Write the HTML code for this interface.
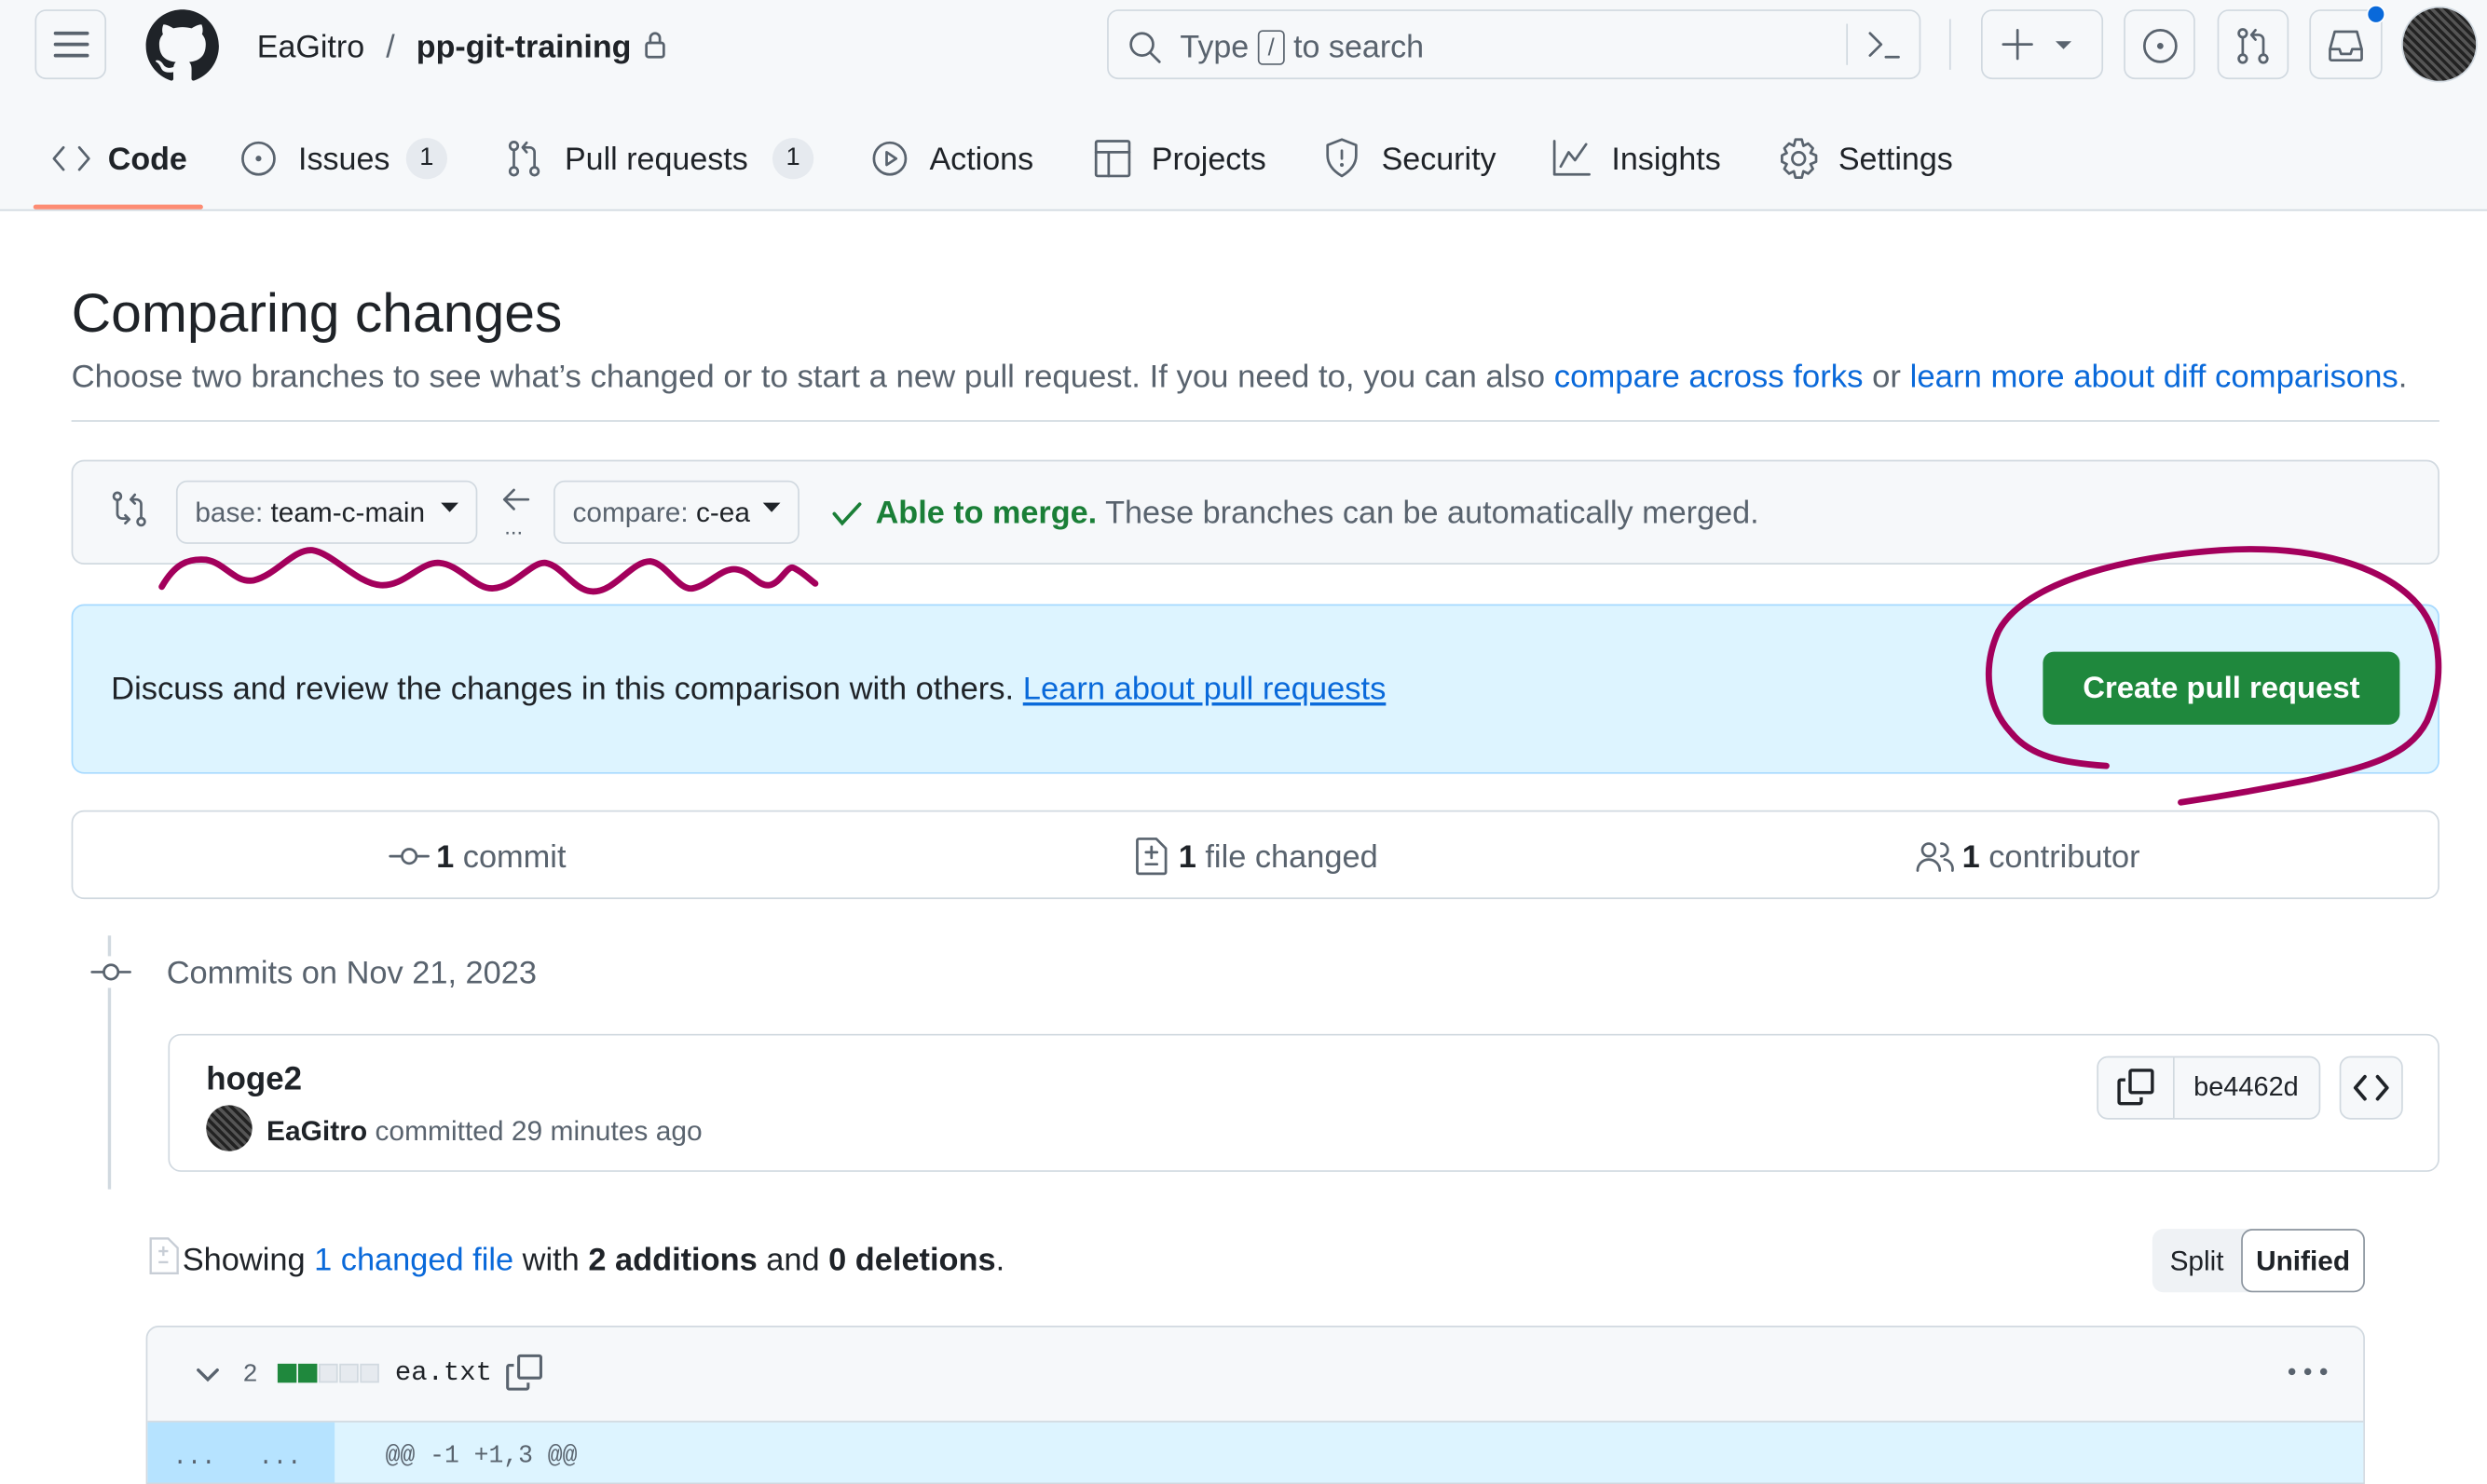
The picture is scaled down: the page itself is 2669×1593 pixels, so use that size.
<!DOCTYPE html>
<html><head><meta charset="utf-8"><style>
*{box-sizing:border-box;margin:0;padding:0}
html,body{width:2669px;height:1575px;overflow:hidden;background:#fff}
#w{position:absolute;left:0;top:0;width:1568px;height:925px;transform:scale(1.70217);transform-origin:0 0;font-family:"Liberation Sans",sans-serif;color:#1f2328}
.a{position:absolute;white-space:nowrap}
.btn{position:absolute;border:1px solid #d1d9e0;border-radius:7px;background:#f6f8fa}
svg{position:absolute;overflow:visible}
.ic{fill:none;stroke:#59636e;stroke-width:1.6;stroke-linecap:round;stroke-linejoin:round}
.t{font-size:20px;top:90px}
.cnt{position:absolute;top:87px;width:26px;height:26px;border-radius:13px;background:#e6eaef;font-size:16px;text-align:center;line-height:26px}
.mut{color:#59636e}
.lk{color:#0969da}
</style></head><body><div id="w">
<div class="a" style="left:0;top:0;width:1568px;height:133px;background:#f6f8fa;border-bottom:1px solid #d1d9e0"></div>
<div class="a" style="left:21px;top:129px;width:107px;height:3px;background:#fd8c73;border-radius:2px"></div>
<div class="btn" style="left:22px;top:6px;width:45px;height:44px"></div>
<svg style="left:34px;top:18px" width="22" height="20"><path d="M1 3H21M1 10H21M1 17H21" stroke="#59636e" stroke-width="2.2" stroke-linecap="round"/></svg>
<svg style="left:92px;top:6px" width="46" height="46" viewBox="0 0 16 16"><path fill="#1f2328" d="M8 0C3.58 0 0 3.58 0 8c0 3.540 2.29 6.53 5.47 7.59.4.07.55-.17.55-.38 0-.19-.01-.82-.01-1.490-2.01.37-2.53-.49-2.69-.94-.09-.23-.48-.94-.82-1.13-.28-.15-.68-.52-.01-.53.63-.01 1.08.58 1.23.82.72 1.21 1.87.87 2.33.66.07-.52.28-.87.51-1.07-1.78-.2-3.64-.89-3.64-3.95 0-.87.31-1.59.82-2.15-.08-.2-.36-1.02.08-2.12 0 0 .67-.21 2.2.82.64-.18 1.32-.27 2-.27.68 0 1.36.09 2 .27 1.53-1.04 2.2-.82 2.2-.82.44 1.1.16 1.92.08 2.12.51.56.82 1.27.82 2.15 0 3.07-1.87 3.75-3.65 3.95.29.25.54.73.54 1.48 0 1.07-.01 1.93-.01 2.2 0 .21.15.46.55.38A8.013 8.013 0 0016 8c0-4.42-3.58-8-8-8z"/></svg>
<div class="a" style="left:162px;top:19px;font-size:20px">EaGitro <span class="mut" style="margin:0 8px">/</span> <span style="font-weight:bold">pp-git-training</span></div>
<svg style="left:406px;top:19px" width="14" height="18"><rect x="1.5" y="8" width="11" height="9" rx="1.5" class="ic" stroke="#1f2328"/><path d="M4 8V5a3 3 0 016 0v3" class="ic" stroke="#1f2328"/></svg>
<div class="btn" style="left:698px;top:6px;width:513px;height:44px;background:#f6f8fa"></div>
<svg style="left:711px;top:19px" width="22" height="22"><circle cx="9" cy="9" r="7" class="ic" stroke-width="2"/><path d="M14 14L20 20" class="ic" stroke-width="2"/></svg>
<div class="a mut" style="left:744px;top:19px;font-size:20px">Type <span style="display:inline-block;border:1px solid #59636e;border-radius:3px;width:17px;height:22px;text-align:center;font-size:15px;line-height:21px;vertical-align:1px">/</span> to search</div>
<div class="a" style="left:1164px;top:15px;width:1px;height:26px;background:#d1d9e0"></div>
<svg style="left:1177px;top:18px" width="22" height="22"><path d="M2 3L9 10L2 17M12 18H20" class="ic" stroke-width="1.8"/></svg>
<div class="a" style="left:1229px;top:12px;width:1px;height:32px;background:#d1d9e0"></div>
<div class="btn" style="left:1249px;top:6px;width:77px;height:44px"></div>
<svg style="left:1262px;top:18px" width="50" height="20"><path d="M10 1V19M1 10H19" class="ic" stroke-width="2"/><path d="M34 8H44L39 13Z" fill="#59636e"/></svg>
<div class="btn" style="left:1339px;top:6px;width:45px;height:44px"></div>
<svg style="left:1350px;top:17px" width="24" height="24"><circle cx="12" cy="12" r="10" class="ic" stroke-width="2"/><circle cx="12" cy="12" r="2" fill="#59636e"/></svg>
<div class="btn" style="left:1398px;top:6px;width:45px;height:44px"></div>
<svg style="left:1409px;top:17px" width="24" height="24"><circle cx="5" cy="4" r="2.5" class="ic" stroke-width="1.8"/><circle cx="5" cy="20" r="2.5" class="ic" stroke-width="1.8"/><circle cx="18" cy="20" r="2.5" class="ic" stroke-width="1.8"/><path d="M5 7V17M18 17V8a3 3 0 00-3-3H11M13 2L10.5 5L13 8" class="ic" stroke-width="1.8"/></svg>
<div class="btn" style="left:1456px;top:6px;width:46px;height:44px"></div>
<svg style="left:1467px;top:17px" width="24" height="24"><path d="M2 14L5 3H19L22 14V20a1 1 0 01-1 1H3a1 1 0 01-1-1Z M2 14H8L9 17H15L16 14H22" class="ic" stroke-width="1.8"/></svg>
<div class="a" style="left:1492px;top:3px;width:12px;height:12px;border-radius:6px;background:#0969da;border:1px solid #fff"></div>
<div class="a" style="left:1514px;top:4px;width:48px;height:48px;border-radius:24px;background:repeating-linear-gradient(45deg,#555 0 2px,#222 2px 4px),#333;border:1px solid #d1d9e0"></div>
<!-- tabs -->
<svg style="left:33px;top:90px" width="24" height="20"><path d="M7 3L1 10L7 17M17 3L23 10L17 17" class="ic" stroke-width="1.8"/></svg>
<div class="a t" style="left:68px;font-weight:bold">Code</div>
<svg style="left:152px;top:88px" width="24" height="24"><circle cx="11" cy="12" r="10" class="ic" stroke-width="1.8"/><circle cx="11" cy="12" r="1.8" fill="#59636e"/></svg>
<div class="a t" style="left:188px">Issues</div><div class="cnt" style="left:256px">1</div>
<svg style="left:320px;top:88px" width="24" height="24"><circle cx="4" cy="4" r="2.5" class="ic"/><circle cx="4" cy="20" r="2.5" class="ic"/><circle cx="17" cy="20" r="2.5" class="ic"/><path d="M4 7V17M17 17V8a3 3 0 00-3-3H10M12 2L9.5 5L12 8" class="ic"/></svg>
<div class="a t" style="left:356px">Pull requests</div><div class="cnt" style="left:487px">1</div>
<svg style="left:550px;top:88px" width="24" height="24"><circle cx="11" cy="12" r="10" class="ic" stroke-width="1.8"/><path d="M9 8L15 12L9 16Z" class="ic"/></svg>
<div class="a t" style="left:586px">Actions</div>
<svg style="left:690px;top:88px" width="24" height="24"><rect x="1" y="1" width="21" height="22" rx="1" class="ic" stroke-width="1.8"/><path d="M1 8H22M9 8V23" class="ic" stroke-width="1.8"/></svg>
<div class="a t" style="left:726px">Projects</div>
<svg style="left:835px;top:87px" width="24" height="26"><path d="M11 1L2 4.5V11C2 17 6 21 11 24C16 21 20 17 20 11V4.5Z" class="ic" stroke-width="1.8"/><path d="M11 8V13" class="ic" stroke-width="2"/><circle cx="11" cy="17" r="1.2" fill="#59636e"/></svg>
<div class="a t" style="left:871px">Security</div>
<svg style="left:979px;top:88px" width="24" height="24"><path d="M1 1V22H23M5 17L10 8L14 13L21 3" class="ic" stroke-width="1.8"/></svg>
<div class="a t" style="left:1016px">Insights</div>
<svg style="left:1123px;top:87px" width="24" height="26"><circle cx="11" cy="13" r="4" class="ic" stroke-width="1.8"/><path d="M9 1H13L14 5L17 3.5L20 6.5L18.5 9.5L22 11V15L18.5 16.5L20 19.5L17 22.5L14 21L13 25H9L8 21L5 22.5L2 19.5L3.5 16.5L0.5 15V11L3.5 9.5L2 6.5L5 3.5L8 5Z" class="ic" stroke-width="1.6"/></svg>
<div class="a t" style="left:1159px">Settings</div>
<!-- heading -->
<div class="a" style="left:45px;top:179px;font-size:34.6px">Comparing changes</div>
<div class="a mut" style="left:45px;top:227px;font-size:20.4px">Choose two branches to see what’s changed or to start a new pull request. If you need to, you can also <span class="lk">compare across forks</span> or <span class="lk">learn more about diff comparisons</span>.</div>
<div class="a" style="left:45px;top:265px;width:1493px;height:1px;background:#d1d9e0"></div>
<!-- compare box -->
<div class="btn" style="left:45px;top:290px;width:1493px;height:66px;border-radius:8px"></div>
<svg style="left:70px;top:309px" width="24" height="24"><circle cx="4" cy="4" r="2.3" class="ic"/><circle cx="19" cy="20" r="2.3" class="ic"/><path d="M4 7V15a3 3 0 003 3H11M9 16L11.5 18.5L9 21M19 17V9a3 3 0 00-3-3H13M15 3L12.5 6L15 8.5" class="ic"/></svg>
<div class="btn" style="left:111px;top:303px;width:190px;height:40px"></div>
<div class="a" style="left:123px;top:313px;font-size:17.5px"><span class="mut">base:</span> team-c-main</div>
<svg style="left:278px;top:317px" width="12" height="8"><path d="M0 0H11L5.5 6Z" fill="#1f2328"/></svg>
<svg style="left:316px;top:307px" width="20" height="16"><path d="M17 8H2M8 2L2 8L8 14" class="ic" stroke-width="1.8"/></svg>
<div class="a mut" style="left:318px;top:324px;font-size:14px">...</div>
<div class="btn" style="left:349px;top:303px;width:155px;height:40px"></div>
<div class="a" style="left:361px;top:313px;font-size:17.5px"><span class="mut">compare:</span> c-ea</div>
<svg style="left:481px;top:317px" width="12" height="8"><path d="M0 0H11L5.5 6Z" fill="#1f2328"/></svg>
<svg style="left:524px;top:316px" width="20" height="16"><path d="M2 8L7 14L18 2" fill="none" stroke="#1a7f37" stroke-width="2.2" stroke-linecap="round"/></svg>
<div class="a" style="left:552px;top:313px;font-size:20.1px"><b style="color:#1a7f37">Able to merge.</b> <span class="mut">These branches can be automatically merged.</span></div>
<!-- blue box -->
<div class="a" style="left:45px;top:381px;width:1493px;height:107px;background:#ddf4ff;border:1px solid #a6d9ff;border-radius:8px"></div>
<div class="a" style="left:70px;top:424px;font-size:20.3px">Discuss and review the changes in this comparison with others. <span class="lk" style="text-decoration:underline">Learn about pull requests</span></div>
<div class="a" style="left:1288px;top:411px;width:225px;height:46px;background:#1f883d;border-radius:7px;color:#fff;font-weight:bold;font-size:19.3px;text-align:center;line-height:47px">Create pull request</div>
<!-- stats -->
<div class="a" style="left:45px;top:511px;width:1493px;height:56px;border:1px solid #d1d9e0;border-radius:8px"></div>
<svg style="left:245px;top:531px" width="26" height="18"><circle cx="13" cy="9" r="4.5" class="ic" stroke-width="1.8"/><path d="M1 9H8M18 9H25" class="ic" stroke-width="1.8"/></svg>
<div class="a" style="left:275px;top:530px;font-size:20.2px"><b>1</b> <span class="mut">commit</span></div>
<svg style="left:715px;top:528px" width="22" height="24"><path d="M3 1H14L20 7V22a1 1 0 01-1 1H3a1 1 0 01-1-1V2a1 1 0 011-1Z" class="ic" stroke-width="1.6"/><path d="M11 6V13M7.5 9.5H14.5M7.5 17H14.5" class="ic" stroke-width="1.6"/></svg>
<div class="a" style="left:743px;top:530px;font-size:20.2px"><b>1</b> <span class="mut">file changed</span></div>
<svg style="left:1208px;top:530px" width="26" height="20"><circle cx="8" cy="6" r="4" class="ic" stroke-width="1.6"/><path d="M1 19a7 7 0 0114 0M16 2a4 4 0 010 8M18 12a6 6 0 015 7" class="ic" stroke-width="1.6"/></svg>
<div class="a" style="left:1237px;top:530px;font-size:20.2px"><b>1</b> <span class="mut">contributor</span></div>
<!-- timeline -->
<div class="a" style="left:68px;top:590px;width:2px;height:160px;background:#d1d9e0"></div>
<div class="a" style="left:60px;top:603px;width:20px;height:20px;background:#fff"></div>
<svg style="left:57px;top:604px" width="26" height="18"><circle cx="13" cy="9" r="4.5" class="ic" stroke-width="1.8"/><path d="M1 9H8M18 9H25" class="ic" stroke-width="1.8"/></svg>
<div class="a mut" style="left:105px;top:603px;font-size:20.2px">Commits on Nov 21, 2023</div>
<div class="a" style="left:106px;top:652px;width:1432px;height:87px;border:1px solid #d1d9e0;border-radius:8px;background:#fff"></div>
<div class="a" style="left:130px;top:669px;font-size:20.5px;font-weight:bold">hoge2</div>
<div class="a" style="left:130px;top:697px;width:29px;height:29px;border-radius:15px;background:repeating-linear-gradient(45deg,#555 0 2px,#222 2px 4px)"></div>
<div class="a" style="left:168px;top:703px;font-size:17.6px"><b>EaGitro</b> <span class="mut">committed 29 minutes ago</span></div>
<div class="btn" style="left:1322px;top:666px;width:141px;height:40px"></div>
<div class="a" style="left:1370px;top:667px;width:1px;height:38px;background:#d1d9e0"></div>
<svg style="left:1334px;top:673px" width="26" height="26"><path d="M6 8H3a1 1 0 00-1 1V22a1 1 0 001 1H15a1 1 0 001-1V19" fill="none" stroke="#1f2328" stroke-width="2"/><rect x="9" y="2" width="14" height="14" rx="1" fill="none" stroke="#1f2328" stroke-width="2"/></svg>
<div class="a" style="left:1383px;top:676px;font-size:17px">be4462d</div>
<div class="btn" style="left:1475px;top:666px;width:40px;height:40px"></div>
<svg style="left:1483px;top:677px" width="24" height="18"><path d="M8 2L2 9L8 16M16 2L22 9L16 16" fill="none" stroke="#1f2328" stroke-width="2.2" stroke-linecap="round" stroke-linejoin="round"/></svg>
<!-- showing -->
<svg style="left:93px;top:780px" width="20" height="24"><path d="M2 1H13L19 7V23H2Z" fill="none" stroke="#c8ced6" stroke-width="1.4"/><path d="M10 6V12M7 9H13M7 16H13" stroke="#c8ced6" stroke-width="1.4"/></svg>
<div class="a" style="left:115px;top:784px;font-size:20.2px">Showing <span class="lk">1 changed file</span> with <span style="font-weight:bold">2 additions</span> and <span style="font-weight:bold">0 deletions</span>.</div>
<div class="a" style="left:1357px;top:775px;width:134px;height:40px;background:#eff2f5;border-radius:7px"></div>
<div class="a" style="left:1368px;top:785px;font-size:17.5px">Split</div>
<div class="a" style="left:1413px;top:775px;width:78px;height:40px;background:#fff;border:1px solid #8c959f;border-radius:7px;font-size:17.5px;font-weight:bold;text-align:center;line-height:39px">Unified</div>
<!-- file -->
<div class="a" style="left:92px;top:836px;width:1399px;height:100px;border:1px solid #d1d9e0;border-radius:8px 8px 0 0;background:#f6f8fa;overflow:hidden">
 <div class="a" style="left:0;top:59px;width:1399px;height:50px;background:#ddf4ff;border-top:1px solid #d1d9e0"></div>
 <div class="a" style="left:0;top:60px;width:118px;height:50px;background:#b6e3ff"></div>
 <div class="a mut" style="left:16px;top:74px;font-size:15px;font-family:'Liberation Mono',monospace">...&nbsp;&nbsp;&nbsp;...</div>
 <div class="a mut" style="left:150px;top:72px;font-size:15.5px;font-family:'Liberation Mono',monospace">@@ -1 +1,3 @@</div>
</div>
<svg style="left:123px;top:861px" width="16" height="12"><path d="M2 3L8 9L14 3" fill="none" stroke="#59636e" stroke-width="2" stroke-linecap="round"/></svg>
<div class="a mut" style="left:153px;top:858px;font-size:16px;font-family:'Liberation Mono',monospace">2</div>
<div class="a" style="left:175px;top:860px;width:12px;height:12px;background:#1f883d"></div>
<div class="a" style="left:188px;top:860px;width:12px;height:12px;background:#1f883d"></div>
<div class="a" style="left:201px;top:860px;width:12px;height:12px;background:#e6eaef;border:1px solid #d1d9e0"></div>
<div class="a" style="left:214px;top:860px;width:12px;height:12px;background:#e6eaef;border:1px solid #d1d9e0"></div>
<div class="a" style="left:227px;top:860px;width:12px;height:12px;background:#e6eaef;border:1px solid #d1d9e0"></div>
<div class="a" style="left:249px;top:857px;font-size:17px;font-family:'Liberation Mono',monospace">ea.txt</div>
<svg style="left:319px;top:854px" width="24" height="24"><path d="M5 7H2a1 1 0 00-1 1V21a1 1 0 001 1H13a1 1 0 001-1V18" fill="none" stroke="#59636e" stroke-width="1.8"/><rect x="8" y="1" width="14" height="14" rx="1" fill="none" stroke="#59636e" stroke-width="1.8"/></svg>
<svg style="left:1441px;top:861px" width="28" height="8"><circle cx="4" cy="4" r="2.2" fill="#59636e"/><circle cx="14" cy="4" r="2.2" fill="#59636e"/><circle cx="24" cy="4" r="2.2" fill="#59636e"/></svg>
<!-- annotations -->
<svg style="left:0;top:0" width="1568" height="925"><path d="M102,370 C110,356 118,352 130,353 C142,355 148,368 160,366 C175,362 185,346 197,347 C210,349 225,368 240,369 C255,370 265,354 277,355 C290,356 300,372 311,371 C325,370 335,354 344,355 C355,357 362,373 374,373 C388,373 398,354 410,354 C420,355 428,373 437,371 C447,369 455,358 464,359 C473,360 478,370 485,369 C492,368 496,357 500,358 C505,360 510,365 514,368" fill="none" stroke="#a3005c" stroke-width="4" stroke-linecap="round" stroke-linejoin="round"/>
<path d="M1328,483 C1300,481 1280,477 1268,462 C1252,445 1250,420 1260,398 C1275,370 1330,352 1400,347 C1460,343 1505,358 1525,382 C1540,400 1541,430 1530,455 C1518,478 1490,484 1455,492 C1420,499 1395,503 1375,506" fill="none" stroke="#a3005c" stroke-width="4" stroke-linecap="round" stroke-linejoin="round"/></svg>
</div></body></html>
